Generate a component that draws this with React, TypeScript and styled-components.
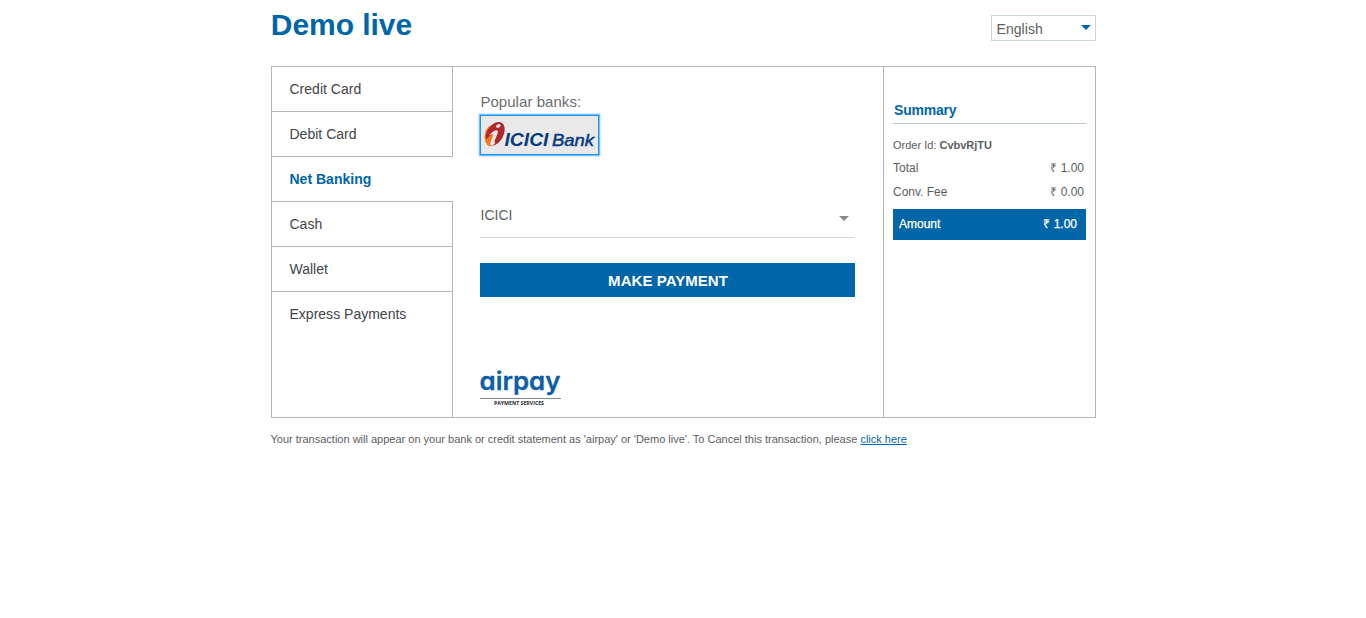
import React from "react";
import styled, { createGlobalStyle } from "styled-components";

const blue = "#0066a7";
const line = "#b3b5b8";

const GlobalStyle = createGlobalStyle`
  * { box-sizing: border-box; }
  body {
    margin: 0;
    background: #fff;
    color: #5b5e61;
    font-family: "Liberation Sans", Arial, sans-serif;
  }
`;

const Page = styled.div`
  width: 825px;
  margin-left: 271px;
`;

const Header = styled.header`
  display: flex;
  justify-content: space-between;
  height: 66px;
`;

const Title = styled.h1`
  margin: 7px 0 0 -0.2px;
  font-size: 30px;
  line-height: 35px;
  font-weight: 700;
  letter-spacing: -0.05px;
  color: ${blue};
`;

const Language = styled.button`
  display: flex;
  align-items: center;
  justify-content: space-between;
  width: 105px;
  height: 26px;
  margin-top: 15px;
  padding: 2px 4px 0 4.5px;
  border: 1px solid #cdd9dd;
  background: #fff;
  font: 14px "Liberation Sans", Arial, sans-serif;
  letter-spacing: 0.05px;
  color: #5b5e61;
`;

const Caret = styled.svg<{ $lift?: number }>`
  display: block;
  width: 10px;
  height: 5px;
  margin-top: ${(p) => p.$lift ?? 0}px;
`;

const Panel = styled.main`
  display: grid;
  grid-template-columns: 181px 430px 1fr;
  height: 352px;
  border: 1px solid ${line};
`;

const Tabs = styled.nav`
  display: flex;
  flex-direction: column;
`;

const Tab = styled.div<{ $active?: boolean; $last?: boolean }>`
  flex: ${(p) => (p.$last ? "1" : "0 0 45px")};
  padding-left: 17.5px;
  border-right: ${(p) => (p.$active ? "0" : `1px solid ${line}`)};
  border-bottom: ${(p) => (p.$last ? "0" : `1px solid ${line}`)};
  font-size: 14px;
  line-height: 44px;
  letter-spacing: 0.01px;
  font-weight: ${(p) => (p.$active ? 700 : 400)};
  color: ${(p) => (p.$active ? blue : "#414449")};
`;

const Content = styled.section`
  display: flex;
  flex-direction: column;
  align-items: flex-start;
  padding: 26px 28px 0 27px;
`;

const Label = styled.div`
  padding-left: 0.4px;
  font-size: 15px;
  line-height: 18px;
  letter-spacing: 0.05px;
  color: #6a6d70;
`;

const BankButton = styled.button`
  width: 119px;
  height: 40px;
  margin-top: 4px;
  padding: 0;
  border: 1px solid #1b93f5;
  box-shadow: 0 0 0 1px #77bdf8, 0 0 2px 1px #8cc8fb;
  background: #e9e9e9;
`;

const BankLogo = styled.svg`
  display: block;
  width: 117px;
  height: 38px;
`;

const BankSelect = styled.div`
  display: flex;
  align-items: center;
  justify-content: space-between;
  width: 375px;
  height: 43px;
  margin-top: 40px;
  padding: 0 6px 2px 0.5px;
  border-bottom: 1px solid #cdd9dd;
  font-size: 14px;
`;

const PayButton = styled.button`
  width: 375px;
  height: 34px;
  margin-top: 25px;
  padding: 0 0 0 1px;
  border: 0;
  background: ${blue};
  color: #fff;
  font: 700 15px "Liberation Sans", Arial, sans-serif;
  letter-spacing: 0.05px;
`;

const AirpayLogo = styled.svg`
  display: block;
  width: 84px;
  height: 40px;
  margin: 71px 0 0 -1px;
  overflow: visible;
`;

const AirpayName = styled.text`
  font-family: Inter, sans-serif;
  font-size: 25px;
  font-weight: 600;
  font-feature-settings: "cv11";
  fill: #0b5ea8;
  stroke: #0b5ea8;
  stroke-width: 0.3px;
`;

const Summary = styled.aside`
  padding: 34px 9px 0;
  border-left: 1px solid ${line};
  font-size: 12px;
`;

const SummaryTitle = styled.h2`
  margin: 0 0 10px;
  padding: 0 0 0 1px;
  height: 23px;
  border-bottom: 1px solid #b9c6cd;
  font-size: 14px;
  line-height: 18px;
  letter-spacing: -0.2px;
  color: ${blue};
`;

const OrderId = styled.div`
  height: 22px;
  font-size: 11px;
  line-height: 22px;
`;

const Row = styled.div`
  display: flex;
  justify-content: space-between;
  padding-right: 2px;
  line-height: 24px;
`;

const AmountRow = styled.div`
  display: flex;
  justify-content: space-between;
  height: 31px;
  margin-top: 5px;
  padding: 0 9px 0 6px;
  background: ${blue};
  color: #fff;
  line-height: 30px;
  -webkit-text-stroke: 0.25px #fff;
`;

const Notice = styled.p`
  margin: 14px 0 0 -0.5px;
  font-size: 11px;
  line-height: 14px;
`;

const Link = styled.a`
  color: ${blue};
  text-decoration: underline;
`;

const tabs = ["Credit Card", "Debit Card", "Net Banking", "Cash", "Wallet", "Express Payments"];

export default function App() {
  return (
    <>
      <GlobalStyle />
      <Page>
        <Header>
          <Title>Demo live</Title>
          <Language>
            English
            <Caret viewBox="0 0 10 5" $lift={-4}><path d="M0 0h10L5 5z" fill={blue} /></Caret>
          </Language>
        </Header>
        <Panel>
          <Tabs>
            {tabs.map((t, i) => (
              <Tab key={t} $active={i === 2} $last={i === tabs.length - 1}>{t}</Tab>
            ))}
          </Tabs>
          <Content>
            <Label>Popular banks:</Label>
            <BankButton aria-label="ICICI Bank">
              <BankLogo viewBox="0 0 117 38">
                <path d="M8 10C4 14 2.500 21 4.500 26c1.200 3.500 4 5 7.500 4l2-5-3-12z" fill="#f07c1f" />
                <path d="M17 6c5-.5 7.500 4 6.500 9.500C22.500 22 18.500 27 13 29.500c-2-1-1.500-4-.8-6l2-5.500c.6-1.800-1-1.800-3-.3L5 23.500C3.500 17 9 7 17 6z" fill="#ae282e" />
                <path d="M8 19.500c2.500-3 5.500-5.800 7.800-5.300 1.500.5 1.200 2 .6 3.700l-2.800 7c-.5 1.500 0 2 1 1.500-1.500 2-2.600 3.100-4.100 3.100-1.500-.2-1.500-1.800-.8-3.700l2.500-6.500c.5-1.400-1.500-1.200-4.200.2z" fill="#f1e7e2" />
                <ellipse cx="17.300" cy="10" rx="2.300" ry="1.700" transform="rotate(-25 17.300 10)" fill="#f1e7e2" />
                <text x="23.500" y="29.500" textLength="44" lengthAdjust="spacingAndGlyphs" fontFamily="Liberation Sans" fontSize="17.500" fontWeight="700" fontStyle="italic" fill="#063b7e">ICICI</text>
                <text x="71" y="29.500" textLength="42" lengthAdjust="spacingAndGlyphs" fontFamily="Liberation Sans" fontSize="16.500" fontStyle="italic" fill="#063b7e" stroke="#063b7e" strokeWidth=".5">Bank</text>
              </BankLogo>
            </BankButton>
            <BankSelect>
              ICICI
              <Caret viewBox="0 0 10 5" $lift={6}><path d="M0 0h10L5 5z" fill="#84898c" /></Caret>
            </BankSelect>
            <PayButton>MAKE PAYMENT</PayButton>
            <AirpayLogo viewBox="0 0 84 40">
              <AirpayName x="0.5" y="22" textLength="81" lengthAdjust="spacingAndGlyphs">airpay</AirpayName>
              <path d="M1 30.500h81" stroke="#85888b" />
              <text x="15" y="37" textLength="50" lengthAdjust="spacingAndGlyphs" fontFamily="Open Sans" fontSize="5.500" fontWeight="700" fill="#24272b">PAYMENT SERVICES</text>
            </AirpayLogo>
          </Content>
          <Summary>
            <SummaryTitle>Summary</SummaryTitle>
            <OrderId>Order Id: <b>CvbvRjTU</b></OrderId>
            <Row><span>Total</span><span>₹ 1.00</span></Row>
            <Row><span>Conv. Fee</span><span>₹ 0.00</span></Row>
            <AmountRow><span>Amount</span><span>₹ 1.00</span></AmountRow>
          </Summary>
        </Panel>
        <Notice>
          Your transaction will appear on your bank or credit statement as 'airpay' or 'Demo live'. To Cancel this transaction, please <Link>click here</Link>
        </Notice>
      </Page>
    </>
  );
}
